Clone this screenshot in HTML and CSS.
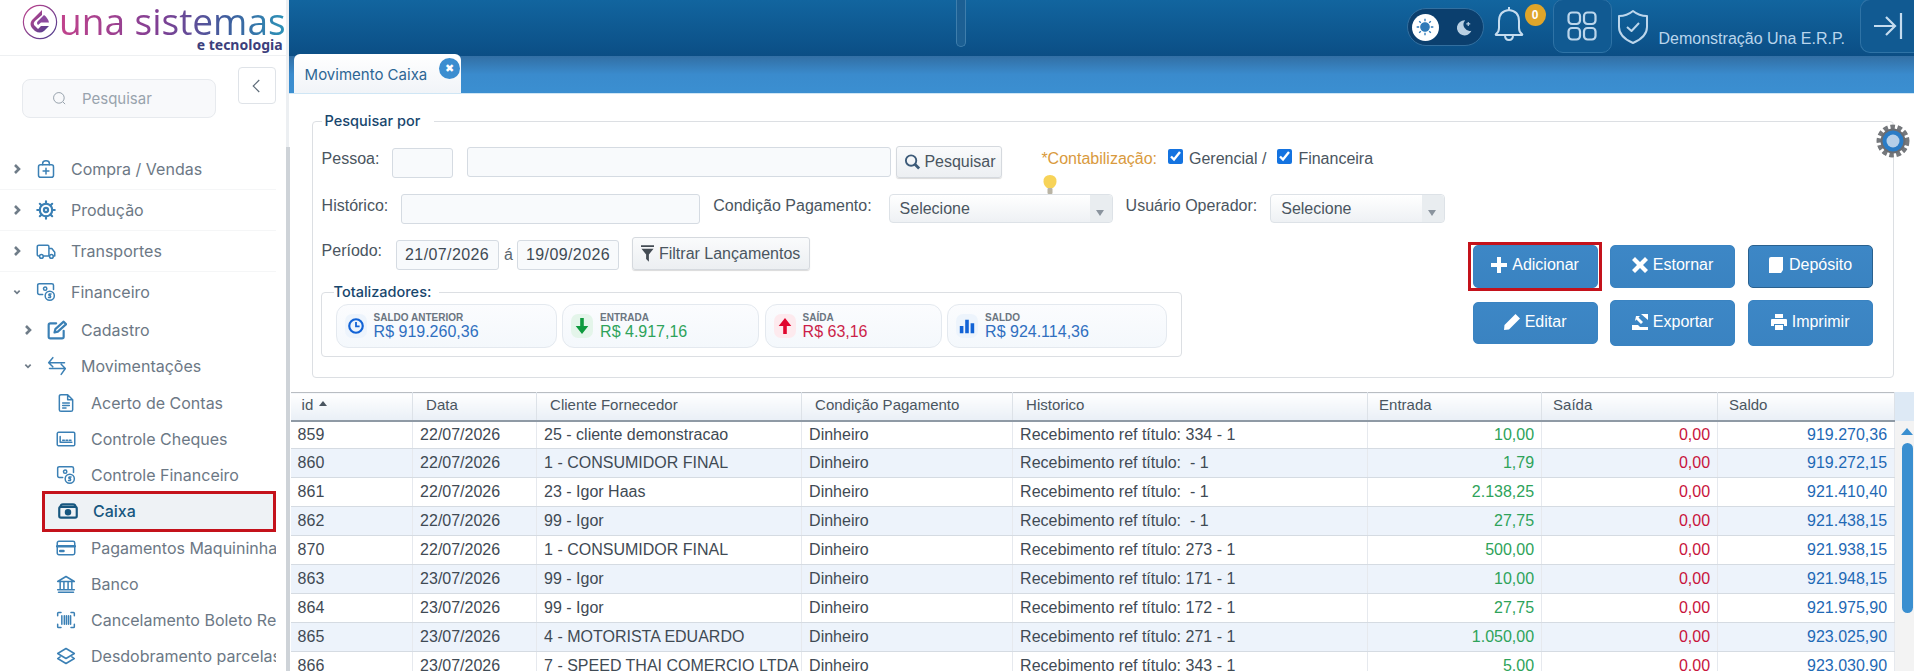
FILE: index.html
```html
<!DOCTYPE html>
<html lang="pt-BR">
<head>
    <meta charset="UTF-8">
    <meta name="viewport" content="width=device-width, initial-scale=1.0">
    <title>Movimento Caixa</title>
    <link rel="stylesheet" href="styles.css">
</head>
<body>

    <!-- Menu lateral -->
    <aside class="lateral">
        <div class="logo">
            <svg class="logo-icone" viewBox="0 0 36 36">
                <defs>
                    <linearGradient id="grad-logo" x1="0" y1="0" x2="1" y2="1">
                        <stop offset="0" stop-color="#c2448e"/>
                        <stop offset="1" stop-color="#4a3f8f"/>
                    </linearGradient>
                </defs>
                <circle cx="18" cy="18" r="16.600" fill="none" stroke="url(#grad-logo)" stroke-width="1.200"/>
                <path d="M20 6 L10 16 Q7 20 10 24 L13 27 Q18 30 22 27 L27 22 H19 L16 25 L12 21 Q11 19 13 17 L20 11 Z" fill="url(#grad-logo)"/>
                <path d="M22 11 L16 17 Q14 19 16 21 L19 18.500 H27 Q26 14 22 11 Z" fill="#8b4a9e"/>
            </svg>
            <div class="logo-texto">
                <span class="logo-nome">una sistemas</span>
                <span class="logo-sub">e tecnologia</span>
            </div>
        </div>

        <div class="busca-linha">
            <div class="busca">
                <svg viewBox="0 0 24 24"><circle cx="11" cy="11" r="8.500"/><path d="M17.500 17.500 L21 21"/></svg>
                <span>Pesquisar</span>
            </div>
            <button class="recolher">
                <svg viewBox="0 0 24 24"><path d="M15 4 L7 12 L15 20"/></svg>
            </button>
        </div>

        <nav class="menu">
            <a class="item n1">
                <svg class="seta" viewBox="0 0 8 12"><path d="M2 2 L6 6 L2 10"/></svg>
                <svg class="ico" viewBox="0 0 24 24"><rect x="3" y="7" width="18" height="15" rx="2.500"/><path d="M8 7 V5 Q8 2 12 2 Q16 2 16 5 V7 M12 11 V18 M8.500 14.500 H15.500"/></svg>
                Compra / Vendas
            </a>
            <a class="item n1">
                <svg class="seta" viewBox="0 0 8 12"><path d="M2 2 L6 6 L2 10"/></svg>
                <svg class="ico ico-forte" viewBox="0 0 24 24"><circle cx="12" cy="12" r="7.500"/><circle cx="12" cy="12" r="2.500"/><path d="M12 1.500 V4.500 M12 19.500 V22.500 M1.500 12 H4.500 M19.500 12 H22.500 M4.600 4.600 L6.700 6.700 M17.300 17.300 L19.400 19.400 M4.600 19.400 L6.700 17.300 M17.300 6.700 L19.400 4.600"/></svg>
                Produção
            </a>
            <a class="item n1">
                <svg class="seta" viewBox="0 0 8 12"><path d="M2 2 L6 6 L2 10"/></svg>
                <svg class="ico" viewBox="0 0 24 24"><path d="M4 18 H3 Q1.500 18 1.500 16 V7 Q1.500 5 3.500 5 H14 Q15.500 5 15.500 7 V18 H9 M15.500 9 H19 L22.500 13.500 V18 H21 M15.500 18 H16"/><circle cx="6.500" cy="18.500" r="2.200"/><circle cx="18.500" cy="18.500" r="2.200"/></svg>
                Transportes
            </a>
            <a class="item n1">
                <svg class="seta" viewBox="0 0 12 8"><path d="M2 2 L6 6 L10 2"/></svg>
                <svg class="ico" viewBox="0 0 24 24"><path d="M8 15 H4 Q2 15 2 13 V4 Q2 2 4 2 H19 Q21 2 21 4 V9"/><circle cx="11" cy="8" r="2"/><circle cx="16.500" cy="16.500" r="5.500"/><path d="M18 14.500 H15.800 Q15 15 15.800 16.300 H17.200 Q18 17.500 17.200 18.500 H15"/></svg>
                Financeiro
            </a>
            <a class="item n2">
                <svg class="seta" viewBox="0 0 8 12"><path d="M2 2 L6 6 L2 10"/></svg>
                <svg class="ico ico-forte" viewBox="0 0 24 24"><path d="M11 4 H4 Q2 4 2 6 V20 Q2 22 4 22 H18 Q20 22 20 20 V13 M9 15 L10 11 L20 2 L23 5 L13 14 Z"/></svg>
                Cadastro
            </a>
            <a class="item n2">
                <svg class="seta" viewBox="0 0 12 8"><path d="M2 2 L6 6 L10 2"/></svg>
                <svg class="ico" viewBox="0 0 24 24"><path d="M7 2 L2 8 H21 M2 8 L7 13 M3 15 H22 L17 22 M22 15 L17 10"/></svg>
                Movimentações
            </a>
            <a class="item n3">
                <svg class="ico" viewBox="0 0 24 24"><path d="M14 2 H6 Q4 2 4 4 V20 Q4 22 6 22 H18 Q20 22 20 20 V8 Z M14 2 V8 H20 M8 12 H16 M8 15 H16 M8 18 H12"/></svg>
                Acerto de Contas
            </a>
            <a class="item n3">
                <svg class="ico" viewBox="0 0 24 24"><rect x="1.500" y="4" width="21" height="16" rx="1.500"/><path d="M5 9 V16 H19 M8 13.500 H10 M12 13.500 H14 M16 13.500 H18"/></svg>
                Controle Cheques
            </a>
            <a class="item n3">
                <svg class="ico" viewBox="0 0 24 24"><path d="M8 15 H4 Q2 15 2 13 V4 Q2 2 4 2 H19 Q21 2 21 4 V9"/><circle cx="11" cy="8" r="2"/><circle cx="16.500" cy="16.500" r="5.500"/><path d="M18 14.500 H15.800 Q15 15 15.800 16.300 H17.200 Q18 17.500 17.200 18.500 H15"/></svg>
                Controle Financeiro
            </a>
            <a class="item n3 ativo">
                <svg class="ico ico-escuro" viewBox="0 0 24 24"><path d="M3 7 Q3 4 6 4 H18 Q21 4 21 7"/><rect x="1.500" y="7" width="21" height="13" rx="2"/><circle cx="12" cy="13.500" r="2.600" fill="currentColor"/></svg>
                Caixa
            </a>
            <a class="item n3">
                <svg class="ico" viewBox="0 0 24 24"><rect x="1.500" y="4" width="21" height="16" rx="2"/><path d="M1.500 10 H22.500" stroke-width="3"/><path d="M5 15.500 H9" stroke-width="3"/></svg>
                Pagamentos Maquininhas
            </a>
            <a class="item n3">
                <svg class="ico" viewBox="0 0 24 24"><path d="M2 9 L12 3 L22 9 Z M3 22 H21 M2 19 H22 M5 10 V18 M9.500 10 V18 M14.500 10 V18 M19 10 V18"/></svg>
                Banco
            </a>
            <a class="item n3">
                <svg class="ico" viewBox="0 0 24 24"><path d="M2 7 V4 Q2 3 3 3 H6 M18 3 H21 Q22 3 22 4 V7 M22 17 V20 Q22 21 21 21 H18 M6 21 H3 Q2 21 2 20 V17 M7 7 V17 M10 7 V17 M12.500 7 V17 M15 7 V17 M17.500 7 V17"/></svg>
                Cancelamento Boleto Recebido
            </a>
            <a class="item n3">
                <svg class="ico" viewBox="0 0 24 24"><path d="M12 3 L22 9 L12 15 L2 9 Z M5 13 L2 15 L12 21 L22 15 L19 13"/></svg>
                Desdobramento parcelas
            </a>
        </nav>
    </aside>

    <main class="principal">
        <!-- Barra superior -->
        <header class="topo">
            <span class="alca"></span>
            <div class="tema">
                <span class="tema-sol">
                    <svg viewBox="0 0 24 24"><circle cx="12" cy="12" r="5" fill="#2f7ab8"/><path d="M12 2 V5 M12 19 V22 M2 12 H5 M19 12 H22 M5 5 L7 7 M17 17 L19 19 M5 19 L7 17 M17 7 L19 5"/></svg>
                </span>
                <svg class="tema-lua" viewBox="0 0 24 24"><path d="M14 3 A9.500 9.500 0 1 0 22 16 A8 8 0 0 1 14 3 Z"/><path class="estrela" d="M18 5 V10 M15.500 7.500 H20.500"/></svg>
            </div>
            <div class="sino">
                <svg viewBox="0 0 30 36"><path d="M15 4 Q5 5 5 15 V22 Q5 26 2 28 Q1 29 3 29 H27 Q29 29 28 28 Q25 26 25 22 V15 Q25 5 15 4 Z M15 1 V4 M11 29 Q11 34 15 34 Q19 34 19 29"/></svg>
                <span class="contador">0</span>
            </div>
            <button class="topo-botao btn-apps">
                <svg viewBox="0 0 30 30"><rect x="1.500" y="1.500" width="11.500" height="11.500" rx="3.500"/><rect x="17" y="1.500" width="11.500" height="11.500" rx="3.500"/><rect x="1.500" y="17" width="11.500" height="11.500" rx="3.500"/><rect x="17" y="17" width="11.500" height="11.500" rx="3.500"/></svg>
            </button>
            <svg class="escudo" viewBox="0 0 32 36"><path d="M16 2 Q22 7 30 7 V18 Q30 28 16 34 Q2 28 2 18 V7 Q10 7 16 2 Z M10 18 L14.500 22 L22 14"/></svg>
            <span class="usuario">Demonstração Una E.R.P.</span>
            <button class="topo-botao btn-sair">
                <svg viewBox="0 0 30 28"><path d="M1 14 H21 M13 5 L22 14 L13 23 M28 1 V27"/></svg>
            </button>
        </header>

        <!-- Abas -->
        <div class="abas">
            <div class="aba">
                Movimento Caixa
                <span class="aba-fechar">✖</span>
            </div>
        </div>

        <!-- Filtros -->
        <fieldset class="filtros">
            <legend>Pesquisar por</legend>

            <svg class="engrenagem" viewBox="0 0 34 34">
                <circle cx="17" cy="17" r="14" fill="none" stroke="#75787c" stroke-width="5" stroke-dasharray="4.500 2.500"/>
                <circle cx="17" cy="17" r="12.500" fill="#6a6d72"/>
                <circle cx="17" cy="17" r="10.500" fill="#2a7cc6"/>
                <circle cx="17" cy="17" r="6.500" fill="#b5cfe8"/>
            </svg>

            <div class="linha linha-1">
                <label class="rotulo">Pessoa:</label>
                <input class="campo cod" type="text">
                <input class="campo nome" type="text">
                <button class="btn-claro btn-pesquisar">
                    <svg viewBox="0 0 18 18"><circle cx="7.500" cy="7.500" r="5.500"/><path d="M11.500 11.500 L16 16" stroke-width="3"/></svg>
                    Pesquisar
                </button>
                <span class="contabil">*Contabilização:</span>
                <input class="marca" type="checkbox" checked>
                <span class="marca-txt">Gerencial /</span>
                <input class="marca" type="checkbox" checked>
                <span class="marca-txt">Financeira</span>
                <svg class="lampada" viewBox="0 0 14 19"><path d="M7 0 Q13.500 0 13.500 6.500 Q13.500 10 10 13 H4 Q0.500 10 0.500 6.500 Q0.500 0 7 0 Z" fill="#f7d358"/><rect x="4.500" y="13" width="5" height="6" rx="1" fill="#b9b4a4"/></svg>
            </div>

            <div class="linha linha-2">
                <label class="rotulo">Histórico:</label>
                <input class="campo historico" type="text">
                <label class="rotulo rotulo-cond">Condição Pagamento:</label>
                <div class="selecao sel-cond">Selecione</div>
                <label class="rotulo rotulo-usu">Usuário Operador:</label>
                <div class="selecao sel-usu">Selecione</div>
            </div>

            <div class="inferior">
                <div class="inferior-esq">
                    <div class="linha linha-3">
                        <label class="rotulo">Período:</label>
                        <input class="campo data" type="text" value="21/07/2026">
                        <span class="ate">á</span>
                        <input class="campo data data-2" type="text" value="19/09/2026">
                        <button class="btn-claro btn-filtrar">
                            <svg viewBox="0 0 14 18"><path d="M0 0 H14 V2 H0 Z M0.500 4 H13.500 L8.500 10 V18 L5.500 15 V10 Z"/></svg>
                            Filtrar Lançamentos
                        </button>
                    </div>

                    <fieldset class="totais">
                        <legend>Totalizadores:</legend>
                        <div class="cartoes">
                            <div class="cartao c-anterior">
                                <span class="cartao-ico">
                                    <svg viewBox="0 0 20 20"><circle cx="10" cy="10" r="7.500" fill="none" stroke="#1263d6" stroke-width="2.400"/><path d="M10 5.500 V10.500 H14" fill="none" stroke="#1263d6" stroke-width="2"/></svg>
                                </span>
                                <div class="cartao-txt">
                                    <small>SALDO ANTERIOR</small>
                                    <strong>R$ 919.260,36</strong>
                                </div>
                            </div>
                            <div class="cartao c-entrada">
                                <span class="cartao-ico">
                                    <svg viewBox="0 0 20 20"><path d="M8 1 H12 V10 H17 L10 19 L3 10 H8 Z" fill="#0e9a3e"/></svg>
                                </span>
                                <div class="cartao-txt">
                                    <small>ENTRADA</small>
                                    <strong>R$ 4.917,16</strong>
                                </div>
                            </div>
                            <div class="cartao c-saida">
                                <span class="cartao-ico">
                                    <svg viewBox="0 0 20 20"><path d="M8 19 H12 V10 H17 L10 1 L3 10 H8 Z" fill="#e0062e"/></svg>
                                </span>
                                <div class="cartao-txt">
                                    <small>SAÍDA</small>
                                    <strong>R$ 63,16</strong>
                                </div>
                            </div>
                            <div class="cartao c-saldo">
                                <span class="cartao-ico">
                                    <svg viewBox="0 0 20 20"><path d="M2 10 H6 V18 H2 Z M8 3 H12 V18 H8 Z M14 7 H18 V18 H14 Z" fill="#1263d6"/></svg>
                                </span>
                                <div class="cartao-txt">
                                    <small>SALDO</small>
                                    <strong>R$ 924.114,36</strong>
                                </div>
                            </div>
                        </div>
                    </fieldset>
                </div>

                <div class="acoes">
                    <button class="btn-azul destaque">
                        <svg viewBox="0 0 16 16"><path d="M6 0 H10 V6 H16 V10 H10 V16 H6 V10 H0 V6 H6 Z"/></svg>
                        Adicionar
                    </button>
                    <button class="btn-azul">
                        <svg viewBox="0 0 16 16"><path d="M3 0 L8 5 L13 0 L16 3 L11 8 L16 13 L13 16 L8 11 L3 16 L0 13 L5 8 L0 3 Z"/></svg>
                        Estornar
                    </button>
                    <button class="btn-azul btn-deposito">
                        <svg viewBox="0 0 16 16"><path d="M3 0 H15 V13 L13 16 H1 V2 Q1 0 3 0 Z"/></svg>
                        Depósito
                    </button>
                    <button class="btn-azul btn-editar">
                        <svg viewBox="0 0 16 16"><path d="M11.500 0 L16 4.500 L5 15.500 L0 16 L0.500 11 Z"/></svg>
                        Editar
                    </button>
                    <button class="btn-azul">
                        <svg viewBox="0 0 16 16"><path d="M0 11 H6 L8 13 H16 V16 H0 Z M4 2 H8 L6.500 3.500 L11 8 L9 10 L4.500 5.500 L3 7 Z M9 0 H16 V6 Z"/></svg>
                        Exportar
                    </button>
                    <button class="btn-azul">
                        <svg viewBox="0 0 16 16"><path d="M4 0 H12 V4 H4 Z M1 5 H15 Q16 5 16 6 V12 H13 V10 H3 V12 H0 V6 Q0 5 1 5 Z M4 11 H12 V16 H4 Z"/></svg>
                        Imprimir
                    </button>
                </div>
            </div>
        </fieldset>

        <!-- Grade de lançamentos -->
        <div class="grade">
            <table>
                <colgroup>
                    <col class="c-id"><col class="c-data"><col class="c-cliente"><col class="c-cond">
                    <col class="c-hist"><col class="c-ent"><col class="c-sai"><col class="c-sal">
                </colgroup>
                <thead>
                    <tr>
                        <th class="th-id">id <i class="ordem"></i></th>
                        <th>Data</th>
                        <th>Cliente Fornecedor</th>
                        <th>Condição Pagamento</th>
                        <th>Historico</th>
                        <th class="th-num">Entrada</th>
                        <th class="th-num">Saída</th>
                        <th class="th-num">Saldo</th>
                    </tr>
                </thead>
                <tbody>
                    <tr><td>859</td><td>22/07/2026</td><td>25 - cliente demonstracao</td><td>Dinheiro</td><td>Recebimento ref título: 334 - 1</td><td class="ent">10,00</td><td class="sai">0,00</td><td class="sal">919.270,36</td></tr>
                    <tr><td>860</td><td>22/07/2026</td><td>1 - CONSUMIDOR FINAL</td><td>Dinheiro</td><td>Recebimento ref título: &nbsp;- 1</td><td class="ent">1,79</td><td class="sai">0,00</td><td class="sal">919.272,15</td></tr>
                    <tr><td>861</td><td>22/07/2026</td><td>23 - Igor Haas</td><td>Dinheiro</td><td>Recebimento ref título: &nbsp;- 1</td><td class="ent">2.138,25</td><td class="sai">0,00</td><td class="sal">921.410,40</td></tr>
                    <tr><td>862</td><td>22/07/2026</td><td>99 - Igor</td><td>Dinheiro</td><td>Recebimento ref título: &nbsp;- 1</td><td class="ent">27,75</td><td class="sai">0,00</td><td class="sal">921.438,15</td></tr>
                    <tr><td>870</td><td>22/07/2026</td><td>1 - CONSUMIDOR FINAL</td><td>Dinheiro</td><td>Recebimento ref título: 273 - 1</td><td class="ent">500,00</td><td class="sai">0,00</td><td class="sal">921.938,15</td></tr>
                    <tr><td>863</td><td>23/07/2026</td><td>99 - Igor</td><td>Dinheiro</td><td>Recebimento ref título: 171 - 1</td><td class="ent">10,00</td><td class="sai">0,00</td><td class="sal">921.948,15</td></tr>
                    <tr><td>864</td><td>23/07/2026</td><td>99 - Igor</td><td>Dinheiro</td><td>Recebimento ref título: 172 - 1</td><td class="ent">27,75</td><td class="sai">0,00</td><td class="sal">921.975,90</td></tr>
                    <tr><td>865</td><td>23/07/2026</td><td>4 - MOTORISTA EDUARDO</td><td>Dinheiro</td><td>Recebimento ref título: 271 - 1</td><td class="ent">1.050,00</td><td class="sai">0,00</td><td class="sal">923.025,90</td></tr>
                    <tr><td>866</td><td>23/07/2026</td><td>7 - SPEED THAI COMERCIO LTDA</td><td>Dinheiro</td><td>Recebimento ref título: 343 - 1</td><td class="ent">5,00</td><td class="sai">0,00</td><td class="sal">923.030,90</td></tr>
                </tbody>
            </table>
            <div class="rolagem">
                <div class="rolagem-topo"></div>
                <i class="rolagem-seta"></i>
                <div class="rolagem-barra"></div>
            </div>
        </div>
    </main>

</body>
</html>
```

FILE: styles.css
```css
/* Estilos gerais */
* {
    box-sizing: border-box;
}

html,
body {
    height: 671px;
}

body {
    margin: 0;
    display: flex;
    overflow: hidden;
    background: white;
    color: #3f4a54;
    font-family: 'Liberation Sans', Arial, sans-serif;
    font-size: 16px;
}

button {
    font-family: inherit;
    font-size: 16px;
    cursor: pointer;
}

/* Menu lateral */
.lateral {
    position: relative;
    flex: 0 0 287px;
    height: 671px;
    background: white;
    border-right: 3px solid #eceff2;
    font-family: 'Inter', sans-serif;
}

.lateral::after {
    content: "";
    position: absolute;
    top: 147px;
    bottom: 0;
    right: -4px;
    width: 4px;
    background: #ced3d8;
}

.logo {
    display: flex;
    height: 56px;
    padding: 4px 0 0 22px;
    border-bottom: 1px solid #eef0f2;
}

.logo-icone {
    flex: none;
    width: 36px;
    height: 36px;
}

.logo-texto {
    display: flex;
    flex-direction: column;
    align-items: flex-end;
    margin-left: 1px;
}

.logo-nome {
    height: 34px;
    font-family: 'Open Sans', sans-serif;
    font-size: 37px;
    line-height: 34px;
    white-space: nowrap;
    background: linear-gradient(to right, #c2438c, #7e3f94 45%, #3d5f9e 75%, #2c93b8);
    -webkit-background-clip: text;
    background-clip: text;
    color: transparent;
}

.logo-sub {
    margin-right: 3px;
    font-family: 'Noto Sans', sans-serif;
    font-size: 14px;
    font-weight: 700;
    line-height: 14px;
    white-space: nowrap;
    color: #3c3f7c;
}

.busca-linha {
    display: flex;
    align-items: flex-start;
    padding: 11px 0 0 22px;
}

.busca {
    display: flex;
    align-items: center;
    width: 194px;
    height: 39px;
    margin-top: 12px;
    padding-left: 29px;
    background: #f8f9fb;
    border: 1px solid #e7eaee;
    border-radius: 8px;
    color: #98a3ad;
    font-size: 15px;
}

.busca svg {
    width: 15px;
    height: 15px;
    margin-right: 15px;
    fill: none;
    stroke: #98a3ad;
    stroke-width: 1.600;
}

.recolher {
    display: flex;
    align-items: center;
    justify-content: center;
    width: 38px;
    height: 37px;
    margin-left: 22px;
    padding: 0;
    background: white;
    border: 1px solid #dfe3e8;
    border-radius: 4px;
}

.recolher svg {
    width: 18px;
    height: 18px;
    fill: none;
    stroke: #5d6b78;
    stroke-width: 1.600;
}

.menu {
    width: 276px;
    margin-top: 31px;
    overflow: hidden;
    isolation: isolate;
}

.item {
    position: relative;
    display: flex;
    align-items: center;
    height: 36.250px;
    white-space: nowrap;
    color: #6c7885;
    font-size: 16px;
}

.item.n1 {
    height: 41px;
    padding-left: 13px;
    border-bottom: 1px solid #f5f6f7;
}

.item.n1:nth-child(4) {
    border-bottom: 0;
    height: 40px;
}

.item.n2 {
    padding-left: 24px;
}

.item.n2 .ico {
    margin-right: 14px;
}

.item.n3 {
    padding-left: 56px;
}

.seta {
    flex: 0 0 8px;
    height: 12px;
    fill: none;
    stroke: #6f7c88;
    stroke-width: 2.600;
}

.ico {
    flex: 0 0 20px;
    height: 20px;
    margin-right: 15px;
    fill: none;
    stroke: #3b80b5;
    stroke-width: 1.800;
    stroke-linejoin: round;
    stroke-linecap: round;
}

.seta + .ico {
    margin-left: 15px;
}

.ico-forte {
    stroke-width: 2.600;
}

.ico-escuro {
    color: #17577f;
    stroke: #17577f;
    stroke-width: 2.600;
}

.item.ativo {
    color: #17577f;
    font-weight: 500;
    padding-left: 58px;
}

/* Faixa cinza e contorno vermelho do item aberto */
.item.ativo::before {
    content: "";
    position: absolute;
    z-index: -1;
    top: -2px;
    bottom: -2px;
    left: 42px;
    right: 0;
    background: #eef2f5;
}

.item.ativo::after {
    content: "";
    position: absolute;
    top: -2px;
    bottom: -2px;
    left: 42px;
    right: 0;
    border: 3px solid #c4121b;
}

/* Barra superior */
.principal {
    position: relative;
    flex: 1;
    min-width: 0;
    height: 671px;
}

.topo {
    display: flex;
    align-items: flex-start;
    height: 56px;
    padding-left: 667px;
    background: linear-gradient(#12659f, #0b4e85);
}

.alca {
    width: 10px;
    height: 47px;
    background: #1c5f93;
    border: 1px solid #3f7eac;
    border-top: 0;
    border-radius: 0 0 5px 5px;
}

.tema {
    display: flex;
    align-items: center;
    justify-content: space-between;
    width: 77px;
    height: 38px;
    margin: 8px 0 0 auto;
    padding: 0 10px 0 4px;
    background: #0b3f6e;
    border: 1px solid #336f9f;
    border-radius: 19px;
}

.tema-sol {
    display: flex;
    align-items: center;
    justify-content: center;
    width: 27px;
    height: 27px;
    background: white;
    border-radius: 50%;
}

.tema-sol svg {
    width: 20px;
    height: 20px;
    stroke: #2f7ab8;
    stroke-width: 1.600;
}

.tema-lua {
    width: 19px;
    height: 19px;
    fill: #b9cfe2;
}

.estrela {
    stroke: #b9cfe2;
    stroke-width: 1.500;
}

.sino {
    position: relative;
    width: 30px;
    height: 36px;
    margin: 6px 29px 0 10px;
}

.sino svg {
    width: 30px;
    height: 36px;
    fill: none;
    stroke: #c5dcef;
    stroke-width: 2;
}

.contador {
    position: absolute;
    top: -2px;
    left: 31px;
    width: 21px;
    height: 22px;
    background: #dfa52a;
    border-radius: 50%;
    color: white;
    font-size: 12px;
    font-weight: 700;
    line-height: 22px;
    text-align: center;
}

.topo-botao {
    display: flex;
    align-items: center;
    justify-content: center;
    height: 54px;
    margin-top: -1px;
    padding: 0;
    background: #115a92;
    border: 1px solid #2f73a6;
    border-radius: 10px;
}

.btn-apps {
    width: 59px;
}

.btn-apps svg {
    width: 30px;
    height: 30px;
    fill: none;
    stroke: #bcd6ec;
    stroke-width: 2.200;
}

.escudo {
    width: 32px;
    height: 36px;
    margin: 9px 10px 0 5px;
    fill: none;
    stroke: #bcd6ec;
    stroke-width: 2;
    stroke-linejoin: round;
}

.usuario {
    margin-top: 30px;
    color: #b9d5ec;
    white-space: nowrap;
}

.btn-sair {
    width: 54px;
    margin-left: 15px;
    border-right: 0;
    border-radius: 10px 0 0 10px;
}

.btn-sair svg {
    width: 30px;
    height: 28px;
    fill: none;
    stroke: #c5dcef;
    stroke-width: 2.200;
}

/* Abas */
.abas {
    height: 38px;
    padding-left: 5px;
    background: linear-gradient(#326fa4, #3a8bcd 50%, #3b8fd1);
    border-bottom: 1px solid #cfe6f5;
}

.aba {
    position: relative;
    float: left;
    width: 167px;
    height: 39px;
    margin-top: -2px;
    padding: 11px 0 0 11px;
    background: linear-gradient(white, #f1f4f8);
    border-radius: 6px 6px 0 0;
    color: #2d6694;
    font-family: 'Inter', sans-serif;
    font-size: 15px;
}

.aba-fechar {
    position: absolute;
    top: 4px;
    right: 1px;
    width: 21px;
    height: 21px;
    background: #3b8dd0;
    border-radius: 50%;
    color: white;
    font-size: 11px;
    line-height: 21px;
    text-align: center;
}

/* Filtros */
.filtros {
    position: relative;
    width: 1582px;
    height: 267px;
    margin: 17px 0 0 23px;
    padding: 0 0 0 9px;
    border: 1px solid #dcdfe3;
    border-radius: 4px;
}

.filtros legend {
    margin-left: 0;
    padding: 0 14px 0 3px;
    color: #17466d;
    font-family: 'Inter', sans-serif;
    font-size: 14.500px;
    font-weight: 500;
    line-height: 20px;
}

.engrenagem {
    position: absolute;
    top: -7px;
    right: -17px;
    width: 34px;
    height: 34px;
    background: white;
    border-radius: 50%;
}

.linha {
    display: flex;
    align-items: center;
}

.linha-1 {
    position: relative;
    height: 32px;
    margin-top: 15px;
}

.linha-2 {
    height: 30px;
    margin-top: 16px;
}

.linha-3 {
    height: 33px;
}

.rotulo {
    margin-bottom: 6px;
    color: #4a5560;
    white-space: nowrap;
}

.campo {
    height: 30px;
    padding: 0 8px;
    background: #f8fafc;
    border: 1px solid #d5dbe2;
    border-radius: 3px;
    color: #3f4a54;
    font-family: inherit;
    font-size: 16px;
    outline: none;
}

.cod {
    width: 61px;
    margin: 2px 0 0 13px;
}

.nome {
    width: 424px;
    margin-left: 14px;
}

.btn-claro {
    display: flex;
    align-items: center;
    height: 32px;
    padding: 0;
    background: linear-gradient(#fafbfc, #eceff2);
    border: 1px solid #d5d9de;
    border-radius: 3px;
    box-shadow: 0 1px 1px rgba(0, 0, 0, 0.15);
    color: #4a5560;
}

.btn-pesquisar {
    width: 106px;
    margin-left: 5px;
    padding-left: 7px;
}

.btn-pesquisar svg {
    width: 17px;
    height: 18px;
    margin-right: 3px;
    fill: none;
    stroke: #3c5a78;
    stroke-width: 2;
}

.contabil {
    margin: 0 0 6px 39px;
    color: #d99a3d;
    white-space: nowrap;
}

.marca {
    width: 15px;
    height: 15px;
    margin: 0 6px 12px 11px;
    accent-color: #1473e0;
}

.marca-txt {
    margin-bottom: 6px;
    color: #4a5560;
    white-space: nowrap;
}

.lampada {
    position: absolute;
    top: 29px;
    left: 721px;
    width: 14px;
    height: 19px;
}

.historico {
    width: 299px;
    margin-left: 13px;
}

.rotulo-cond {
    margin-left: 13px;
}

.selecao {
    position: relative;
    align-self: flex-start;
    height: 29px;
    margin-left: 17px;
    padding-left: 10px;
    background: linear-gradient(#ffffff, #eef1f4);
    border: 1px solid #dde2e7;
    border-radius: 4px;
    color: #4a5560;
    line-height: 27px;
}

.selecao::before {
    content: "";
    position: absolute;
    top: 0;
    right: 0;
    bottom: 0;
    width: 22px;
    background: #e9edf0;
    border-radius: 0 4px 4px 0;
}

.selecao::after {
    content: "";
    position: absolute;
    right: 8px;
    top: 15px;
    border: 4px solid transparent;
    border-top: 6px solid #8a949e;
    border-bottom: 0;
}

.sel-cond {
    width: 224px;
}

.sel-usu {
    width: 175px;
    margin-left: 13px;
}

.rotulo-usu {
    margin-left: 13px;
}

.inferior {
    display: flex;
    justify-content: space-between;
    margin-top: 13px;
    padding-right: 20px;
}

.inferior-esq {
    width: 861px;
    margin-left: -1px;
}

.linha-3 .rotulo {
    margin-left: 1px;
}

.data {
    width: 103px;
    height: 30px;
    margin: 3px 0 0 14px;
    letter-spacing: 0.400px;
}

.data-2 {
    width: 102px;
    margin-left: 4px;
}

.ate {
    margin: 3px 0 0 5px;
    color: #5b6670;
}

.btn-filtrar {
    width: 178px;
    height: 33px;
    margin-left: 13px;
    padding-left: 8px;
}

.btn-filtrar svg {
    width: 13px;
    height: 17px;
    margin-right: 5px;
    fill: #444c54;
}

/* Totalizadores */
.totais {
    height: 75px;
    margin: 12px 0 0;
    padding: 2px 0 0 14px;
    border: 1px solid #dcdfe3;
    border-radius: 4px;
}

.totais legend {
    margin-left: -2px;
    padding: 0 8px 0 0;
    color: #17466d;
    font-family: 'Inter', sans-serif;
    font-size: 14.500px;
    font-weight: 500;
    line-height: 20px;
}

.cartoes {
    display: flex;
    gap: 5.500px;
}

.cartao {
    display: flex;
    align-items: center;
    height: 44px;
    padding-left: 8px;
    background: linear-gradient(#fbfcfe, #f4f8fc);
    border: 1px solid #e4e9ef;
    border-radius: 12px;
}

.c-anterior {
    width: 221px;
}

.c-entrada {
    width: 197px;
}

.c-saida {
    width: 177px;
}

.c-saldo {
    width: 220px;
}

.cartao-ico {
    display: flex;
    align-items: center;
    justify-content: center;
    width: 22px;
    height: 24px;
    margin-right: 7px;
    border-radius: 7px;
    background: #edf4fc;
}

.cartao-ico svg {
    width: 18px;
    height: 18px;
}

.c-entrada .cartao-ico {
    background: #e4f5ea;
}

.c-saida .cartao-ico {
    background: #fdeaee;
}

.cartao-txt {
    display: flex;
    flex-direction: column;
}

.cartao-txt small {
    color: #6b7580;
    font-size: 10px;
    font-weight: 700;
    line-height: 11px;
}

.cartao-txt strong {
    font-weight: 400;
    line-height: 18px;
}

.c-anterior strong,
.c-saldo strong {
    color: #2f6fc0;
}

.c-entrada strong {
    color: #2ea35a;
}

.c-saida strong {
    color: #cc1f4a;
}

/* Botões de ação */
.acoes {
    display: grid;
    grid-template-columns: repeat(3, 125px);
    grid-template-rows: 43px 46px;
    column-gap: 12.500px;
    row-gap: 12px;
    margin-top: 8px;
}

.btn-azul {
    display: flex;
    align-items: center;
    justify-content: center;
    gap: 5px;
    padding: 0 0 3px;
    background: linear-gradient(#3d87c6, #3a83c1);
    border: 1px solid #3a83c1;
    border-radius: 5px;
    color: white;
}

.btn-azul svg {
    width: 16px;
    height: 16px;
    fill: white;
}

.btn-deposito {
    border-color: #2a618f;
}

.btn-editar {
    align-self: center;
    height: 42px;
}

.destaque {
    position: relative;
    overflow: visible;
}

.destaque::after {
    content: "";
    position: absolute;
    top: -4px;
    bottom: -4px;
    left: -6px;
    right: -5px;
    border: 3px solid #c4121b;
}

/* Grade */
.grade {
    display: flex;
    margin: 14px 0 0 2px;
}

table {
    flex: none;
    width: 1604px;
    border-collapse: collapse;
    table-layout: fixed;
}

.c-id { width: 122px; }
.c-data { width: 124px; }
.c-cliente { width: 265px; }
.c-cond { width: 211px; }
.c-hist { width: 355px; }
.c-ent { width: 174px; }
.c-sai { width: 176px; }
.c-sal { width: 177px; }

th {
    height: 28px;
    padding: 0 0 3px 13px;
    background: linear-gradient(white, #e9eff6);
    border-top: 1px solid #b9bdc2;
    border-bottom: 2px solid #8f9aa5;
    border-right: 1px solid #dde2e8;
    color: #4a5560;
    font-size: 15px;
    font-weight: 400;
    text-align: left;
    white-space: nowrap;
}

.th-id,
.th-num {
    padding-left: 11px;
}

.ordem {
    display: inline-block;
    margin-left: 2px;
    vertical-align: 4px;
    border: 4px solid transparent;
    border-bottom: 5px solid #4a5560;
    border-top: 0;
}

td {
    height: 29px;
    padding: 0 7px;
    border-bottom: 1px solid #d5dbe2;
    border-right: 1px solid #e6e9ee;
    color: #3f4a54;
    white-space: nowrap;
    overflow: hidden;
}

tbody tr:first-child td {
    height: 28px;
}

tbody tr:nth-child(even) td {
    background: #edf3fb;
}

td.ent,
td.sai,
td.sal {
    text-align: right;
}

td.ent {
    color: #2ea35a;
}

td.sai {
    color: #c8143c;
}

td.sal {
    color: #1f69b5;
}

.rolagem {
    position: relative;
    flex: 0 0 21px;
    height: 280px;
    background: #f3f3f3;
}

.rolagem-topo {
    height: 29px;
    background: #dde9f5;
}

.rolagem-seta {
    position: absolute;
    top: 36px;
    left: 6px;
    border: 6px solid transparent;
    border-bottom: 7px solid #3a8fd0;
    border-top: 0;
}

.rolagem-barra {
    position: absolute;
    top: 51px;
    left: 7px;
    width: 11px;
    height: 170px;
    background: #3a8fd0;
    border-radius: 6px;
}
```
